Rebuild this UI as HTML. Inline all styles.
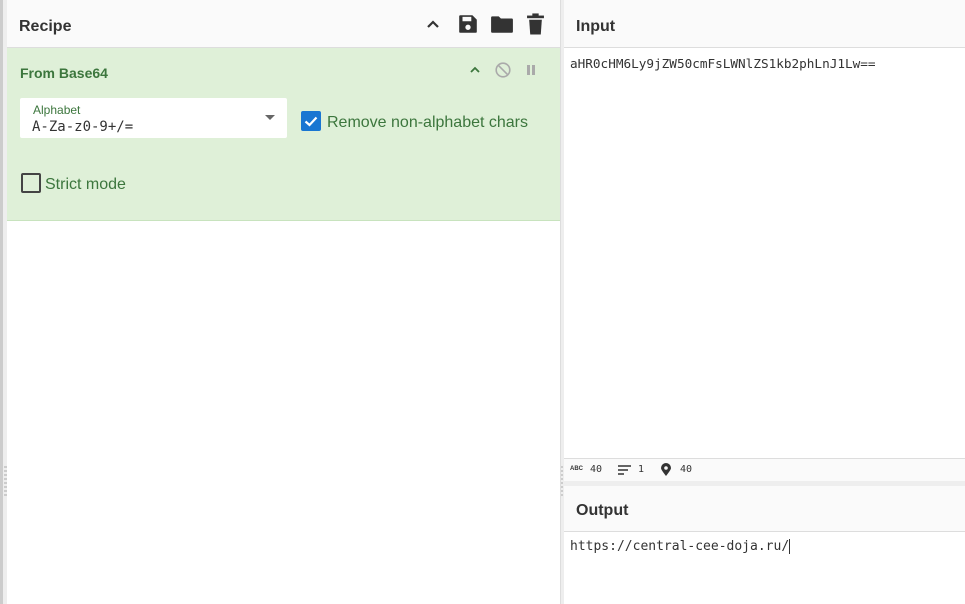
<!DOCTYPE html>
<html><head><meta charset="utf-8"><style>
*{box-sizing:border-box;margin:0;padding:0}
body{width:965px;height:604px;overflow:hidden;background:#fff;font-family:"Liberation Sans",sans-serif;position:relative}
.abs{position:absolute}
.mono{font-family:"DejaVu Sans Mono","Liberation Mono",monospace}
.hdr{background:#fafafa;border-bottom:1px solid #ddd;font-weight:bold;font-size:16px;color:#333}
</style></head><body>
<div class="abs" style="left:0;top:0;width:3px;height:604px;background:#ccc"></div>
<div class="abs" style="left:3px;top:0;width:4px;height:604px;background:#eee"></div>
<div class="abs" style="left:4px;top:466px;width:3px;height:30px;background:repeating-linear-gradient(#ccc 0 2px,transparent 2px 4px)"></div>

<!-- Recipe -->
<div class="abs hdr" style="left:7px;top:0;width:553px;height:48px"><span class="abs" style="left:12px;top:18px">Recipe</span>
<svg class="abs" style="left:418px;top:16px" width="16" height="16" viewBox="0 0 16 16"><path d="M3 11 L8 6 L13 11" stroke="#333" stroke-width="2.2" fill="none"/></svg>
<svg class="abs" style="left:450px;top:13px" width="22" height="22" viewBox="0 0 20 20"><path d="M2 3a1 1 0 0 1 1-1h11l4 4v11a1 1 0 0 1-1 1H3a1 1 0 0 1-1-1z" fill="#333"/><rect x="5" y="3.5" width="8" height="4" fill="#fafafa"/><circle cx="10" cy="13" r="2.4" fill="#fafafa"/></svg>
<svg class="abs" style="left:483px;top:13px" width="24" height="22" viewBox="0 0 22 20"><path d="M1 4a1 1 0 0 1 1-1h6l2 2h10a1 1 0 0 1 1 1v11a1 1 0 0 1-1 1H2a1 1 0 0 1-1-1z" fill="#333"/></svg>
<svg class="abs" style="left:519px;top:12px" width="19" height="24" viewBox="0 0 18 22"><rect x="1" y="3" width="16" height="2.5" fill="#333"/><rect x="6" y="1" width="6" height="3" fill="#333"/><path d="M3 7h12l-1 14H4z" fill="#333"/></svg>
</div>
<div class="abs" style="left:7px;top:48px;width:553px;height:173px;background:#dff0d8;border-bottom:1px solid #c8e3be"></div>
<div class="abs" style="left:20px;top:65px;font-weight:bold;font-size:14px;color:#3c763d">From Base64</div>
<svg class="abs" style="left:469px;top:64px" width="12" height="12" viewBox="0 0 12 12"><path d="M2 8 L6 4 L10 8" stroke="#3c763d" stroke-width="1.8" fill="none"/></svg>
<svg class="abs" style="left:494px;top:61px" width="18" height="18" viewBox="0 0 18 18"><circle cx="9" cy="9" r="6.8" stroke="#aaa" stroke-width="1.6" fill="none"/><path d="M4.3 4.3 L13.7 13.7" stroke="#aaa" stroke-width="1.6"/></svg>
<div class="abs" style="left:527px;top:65px;width:3px;height:10px;background:#aaa"></div>
<div class="abs" style="left:532px;top:65px;width:3px;height:10px;background:#aaa"></div>

<div class="abs" style="left:20px;top:98px;width:267px;height:40px;background:#fff;border-radius:2px"></div>
<div class="abs" style="left:33px;top:103px;font-size:12px;color:#3c763d">Alphabet</div>
<div class="abs mono" style="left:32px;top:119px;font-size:14px;color:#333">A-Za-z0-9+/=</div>
<svg class="abs" style="left:265px;top:115px" width="10" height="6"><path d="M0 0h10L5 5z" fill="#666"/></svg>
<div class="abs" style="left:301px;top:111px;width:20px;height:20px;background:#1976d2;border-radius:2px"></div>
<svg class="abs" style="left:301px;top:111px" width="20" height="20" viewBox="0 0 20 20"><path d="M4.5 10.5 L8.5 14 L15.5 6.5" stroke="#fff" stroke-width="2.2" fill="none"/></svg>
<div class="abs" style="left:327px;top:114px;font-size:16px;color:#3c763d">Remove non-alphabet chars</div>
<div class="abs" style="left:21px;top:173px;width:20px;height:20px;border:2px solid #444;border-radius:2px"></div>
<div class="abs" style="left:45px;top:176px;font-size:16px;color:#3c763d">Strict mode</div>

<!-- divider -->
<div class="abs" style="left:560px;top:0;width:4px;height:604px;background:#eee;border-left:1px solid #ddd"></div>
<div class="abs" style="left:561px;top:466px;width:2px;height:30px;background:repeating-linear-gradient(#ccc 0 2px,transparent 2px 4px)"></div>

<!-- Input -->
<div class="abs hdr" style="left:564px;top:0;width:401px;height:48px"><span class="abs" style="left:12px;top:18px">Input</span></div>
<div class="abs mono" style="left:570px;top:56px;font-size:12.7px;color:#333">aHR0cHM6Ly9jZW50cmFsLWNlZS1kb2phLnJ1Lw==</div>
<div class="abs" style="left:564px;top:458px;width:401px;height:23px;background:#fafafa;border-top:1px solid #ddd;font-size:10px;color:#333">
<span class="abs" style="left:6px;top:7px;font-size:6px;font-weight:bold">ABC</span>
<span class="abs mono" style="left:26px;top:5px">40</span>
<svg class="abs" style="left:54px;top:6px" width="13" height="10"><path d="M0 1h13M0 5h10M0 9h6" stroke="#333" stroke-width="1.6"/></svg>
<span class="abs mono" style="left:74px;top:5px">1</span>
<svg class="abs" style="left:97px;top:4px" width="10" height="13" viewBox="0 0 10 13"><path d="M5 13C1 8 0 6 0 5a5 5 0 0 1 10 0c0 1-1 3-5 8z" fill="#333"/><circle cx="5" cy="5" r="1.8" fill="#fafafa"/></svg>
<span class="abs mono" style="left:116px;top:5px">40</span>
</div>
<div class="abs" style="left:564px;top:481px;width:401px;height:5px;background:#eee"></div>
<div class="abs hdr" style="left:564px;top:486px;width:401px;height:46px"><span class="abs" style="left:12px;top:16px">Output</span></div>
<div class="abs mono" style="left:570px;top:539px;font-size:13px;color:#333">https://central-cee-doja.ru/<span style="border-left:1px solid #333;margin-left:0"></span></div>
</body></html>
